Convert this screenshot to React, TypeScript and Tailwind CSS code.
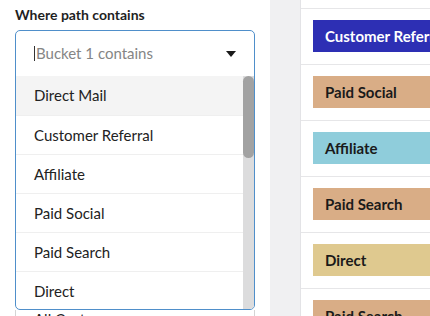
import React from "react";

const items = ["Direct Mail", "Customer Referral", "Affiliate", "Paid Social", "Paid Search", "Direct"];

const tags = [
  { label: "Customer Referral", bg: "bg-[#2d2fb4]", text: "text-white" },
  { label: "Paid Social", bg: "bg-[#d9ad86]", text: "text-[#1a1a1a]" },
  { label: "Affiliate", bg: "bg-[#8fcddb]", text: "text-[#1a1a1a]" },
  { label: "Paid Search", bg: "bg-[#d9ad86]", text: "text-[#1a1a1a]" },
  { label: "Direct", bg: "bg-[#dfc98f]", text: "text-[#1a1a1a]" },
  { label: "Paid Search", bg: "bg-[#d9ad86]", text: "text-[#1a1a1a]" },
];

export default function App() {
  return (
    <div
      className="flex h-[316px] w-[430px] overflow-hidden bg-white"
      style={{ fontFamily: "Lato, 'Noto Sans', sans-serif" }}
    >
      {/* Left panel */}
      <div className="flex w-[270px] shrink-0 flex-col bg-white pl-[15px] pr-[15px]">
        <div className="pt-[5px] text-[14px] font-bold leading-[20px] text-[#1f1f1f]">Where path contains</div>
        <div className="mt-[5px] flex h-[280px] shrink-0 flex-col overflow-hidden rounded-[5px] border border-[#4f8fca] bg-white">
          <div className="flex h-[45px] shrink-0 items-center pl-[18px] pr-[18px]">
            <div className="h-[15px] w-px bg-[#333]" />
            <span className="ml-[1px] flex-1 text-[15px] text-[#858585]">Bucket 1 contains</span>
            <svg width="10" height="6" viewBox="0 0 10 6" className="mr-[0px]">
              <path d="M0 0 H10 L5 6 Z" fill="#1a1a1a" />
            </svg>
          </div>
          <div className="flex min-h-0 flex-1">
            <div className="flex flex-1 flex-col">
              {items.map((it, i) => (
                <div
                  key={it}
                  className={`flex h-[39px] shrink-0 items-center pl-[18px] text-[15px] text-[#222] ${
                    i === 0 ? "bg-[#f4f4f4]" : "border-t border-[#efefef]"
                  }`}
                >
                  {it}
                </div>
              ))}
            </div>
            <div className="flex w-[11px] shrink-0 flex-col bg-[#dcdcdd]">
              <div className="h-[82px] w-full rounded-full bg-[#a2a2a2]" />
            </div>
          </div>
        </div>
        <div className="flex h-[20px] shrink-0 border-l border-r border-[#d4d4d4] pl-[18px] text-[15px] leading-[20px] text-[#222]">
          <span className="-mt-[1px]">All Customers</span>
        </div>
      </div>

      {/* Gray strip */}
      <div className="w-[30px] shrink-0 bg-[#f0f0f2]" />

      {/* Right panel */}
      <div className="flex flex-1 flex-col border-l border-[#e3e3e6] bg-white">
        <div className="h-[9px] shrink-0 border-b border-[#e6e6e8]" />
        {tags.map((t, i) => (
          <div key={i} className="h-[56px] shrink-0 border-b border-[#e6e6e8] pl-[12px] pt-[11px]">
            <div
              className={`flex h-[32px] w-[220px] items-center whitespace-nowrap pl-[12px] text-[15px] font-bold ${t.bg} ${t.text}`}
            >
              {t.label}
            </div>
          </div>
        ))}
      </div>
    </div>
  );
}
